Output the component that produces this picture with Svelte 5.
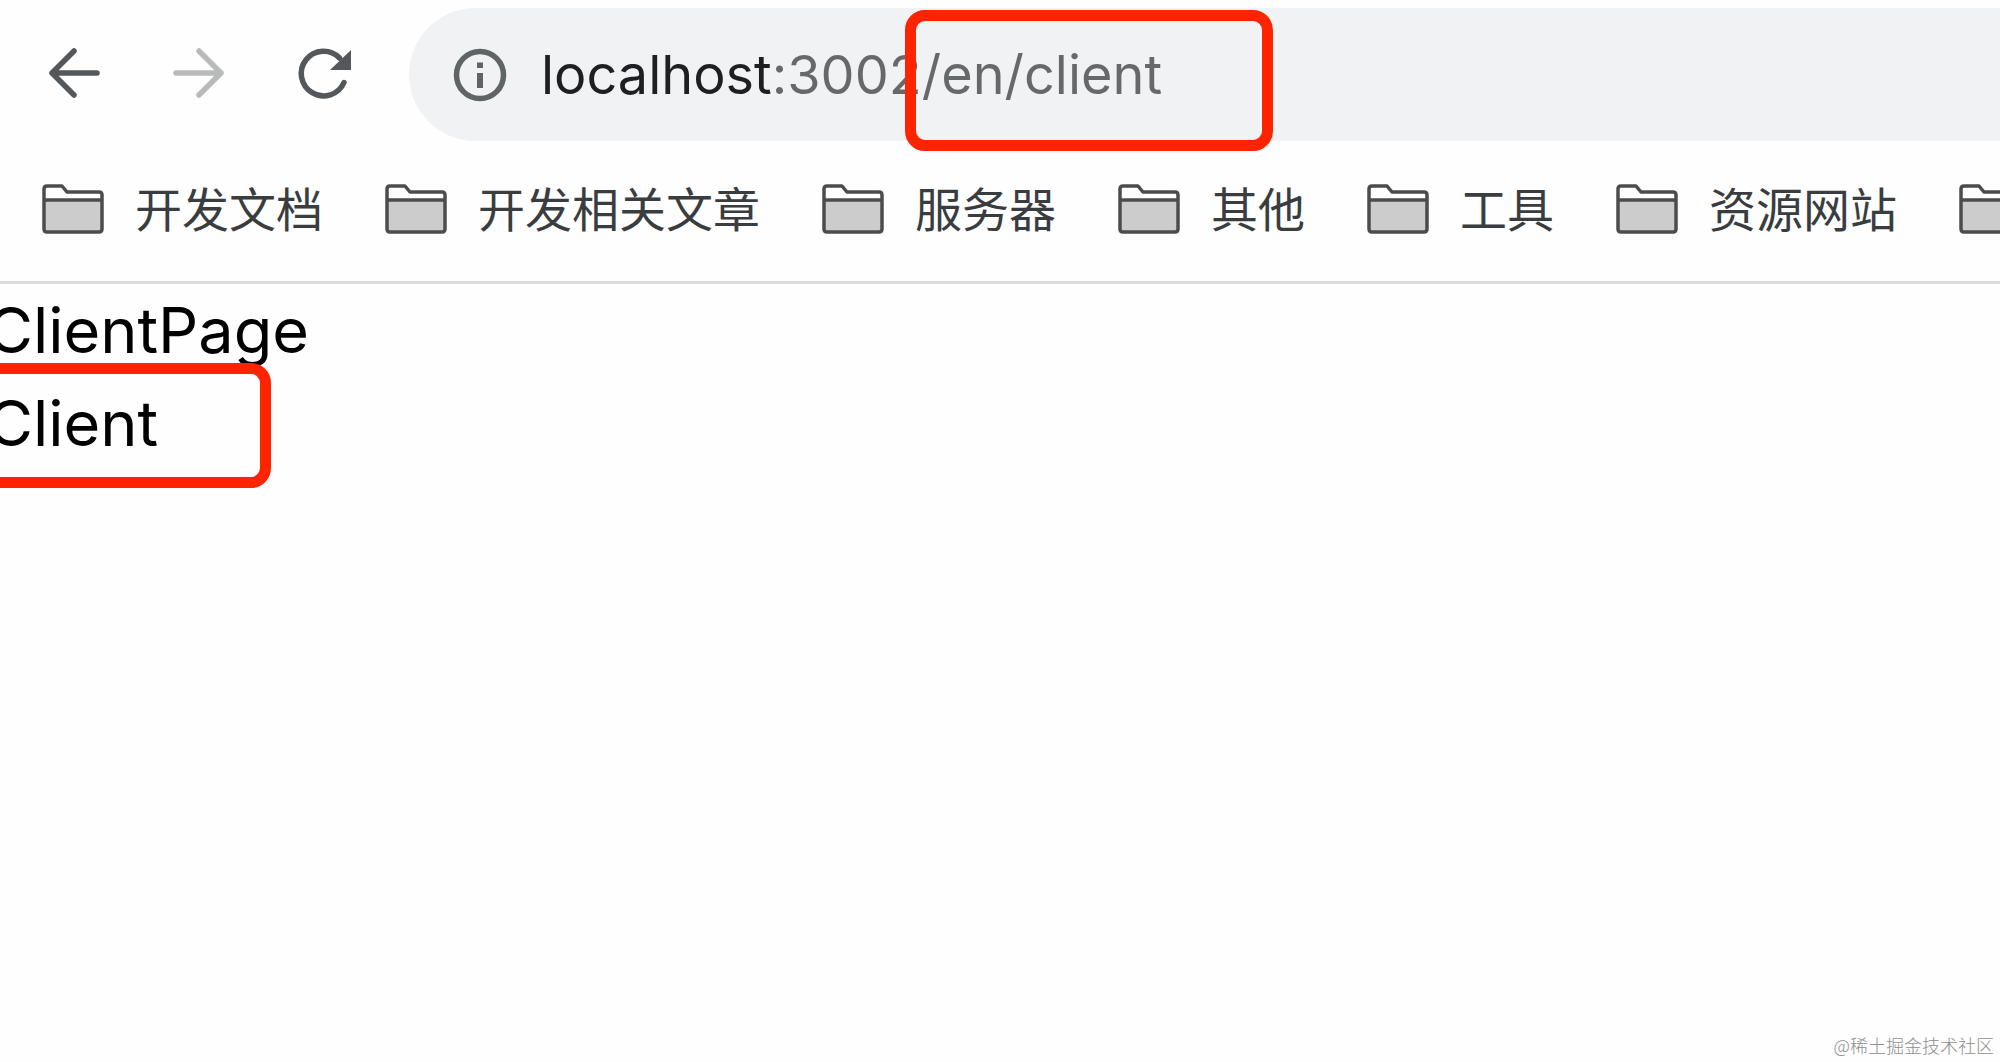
<script>
	let url = $state('localhost:3002/en/client');

	// the last folder has its label past the window edge
	const bookmarks = ['开发文档', '开发相关文章', '服务器', '其他', '工具', '资源网站', ''];
</script>

<div class="browser">
	<header>
		<div class="toolbar">
			<nav>
				<button aria-label="Back">
					<svg viewBox="0 0 56 56" fill="none" stroke="#54585b" stroke-width="5.500" stroke-linecap="round" stroke-linejoin="round">
						<path d="M51 28H6M28 6L6 28l22 22" />
					</svg>
				</button>
				<button aria-label="Forward">
					<svg viewBox="0 0 56 56" fill="none" stroke="#b9bbbb" stroke-width="5.500" stroke-linecap="round" stroke-linejoin="round">
						<path d="M5 28h45M28 6l22 22-22 22" />
					</svg>
				</button>
				<button aria-label="Reload">
					<svg viewBox="0 0 56 56">
						<path d="M48 37.500A22.300 22.300 0 1 1 43.500 13" fill="none" stroke="#54585b" stroke-width="5.500" stroke-linecap="round" />
						<path d="M55 5v20H34z" fill="#54585b" />
					</svg>
				</button>
			</nav>
			<div class="address">
				<svg viewBox="0 0 54 54" aria-hidden="true">
					<circle cx="27" cy="27" r="23.500" fill="none" stroke="#5f6466" stroke-width="5.500" />
					<path d="M24 14.500h6v5.500h-6zM24 25h6v15h-6z" fill="#5f6466" />
				</svg>
				<input type="text" aria-label="Address" spellcheck="false" bind:value={url} />
				<span class="mark path-mark"></span>
			</div>
		</div>
		<div class="bookmarks">
			{#each bookmarks as name}
				<a href="#bookmark" aria-label={name || 'Folder'}>
					<svg viewBox="0 0 62 50" aria-hidden="true">
						<path d="M2 16h58v29q0 3-3 3H5q-3 0-3-3z" fill="#ccc" />
						<path
							d="M2 5q0-3 3-3h15l5 6h32q3 0 3 3v34q0 3-3 3H5q-3 0-3-3zM2 16h58"
							fill="none"
							stroke="#4c4c4c"
							stroke-width="3.500"
							stroke-linejoin="round"
						/>
					</svg>
					<span>{name}</span>
				</a>
			{/each}
		</div>
	</header>
	<main>
		<div>ClientPage</div>
		<div class="client">
			Client
			<span class="mark client-mark"></span>
		</div>
	</main>
	<small>@稀土掘金技术社区</small>
</div>

<style>
	:global(body) {
		margin: 0;
		background: #fefefe;
	}

	.browser {
		position: relative;
		min-height: 100vh;
		overflow: hidden;
		font-family: Inter, 'Noto Sans CJK SC', sans-serif;
	}

	header {
		border-bottom: 3px solid #dcdcdc;
	}

	.toolbar {
		display: flex;
		padding-top: 8px;
	}

	nav {
		display: flex;
		flex: none;
		align-items: center;
		gap: 69px;
		padding: 0 57px 0 46px;
	}

	button {
		display: block;
		width: 56px;
		height: 56px;
		margin-bottom: 4px;
		padding: 0;
		border: 0;
		background: none;
	}

	svg {
		display: block;
		flex: none;
	}

	.address {
		position: relative;
		display: flex;
		flex: 1;
		align-items: center;
		height: 133px;
		padding-left: 44px;
		border-radius: 67px 0 0 67px;
		background: #f0f2f4;
	}

	.address svg {
		width: 54px;
		height: 54px;
	}

	/* host is dark, port and path are grey */
	input {
		flex: 1;
		min-width: 0;
		height: 80px;
		margin-left: 34px;
		padding: 0;
		border: 0;
		outline: 0;
		font: 400 54px Inter, sans-serif;
		color: #66696b;
		background: linear-gradient(90deg, #1d2023 231px, #66696b 231px);
		background-clip: text;
		-webkit-text-fill-color: transparent;
	}

	.mark {
		position: absolute;
		box-sizing: border-box;
		border: 11px solid #ff2400;
		border-radius: 20px;
		pointer-events: none;
	}

	.path-mark {
		top: 2px;
		left: 496px;
		width: 368px;
		height: 141px;
	}

	.bookmarks {
		display: flex;
		gap: 62px;
		height: 136px;
		padding: 0 0 4px 42px;
	}

	.bookmarks a {
		display: flex;
		flex: none;
		align-items: center;
		gap: 31px;
		font-size: 47px;
		color: #3a3d40;
		text-decoration: none;
		white-space: nowrap;
	}

	.bookmarks svg {
		width: 62px;
		height: 50px;
	}

	.bookmarks span {
		padding-bottom: 6px;
	}

	main {
		margin-left: -13px;
		font-size: 63px;
		line-height: 93px;
		color: #000;
	}

	.client {
		position: relative;
	}

	.client-mark {
		top: -14px;
		left: -20px;
		width: 304px;
		height: 125px;
	}

	small {
		position: absolute;
		right: 6px;
		bottom: 5px;
		font-family: 'Noto Sans CJK SC', sans-serif;
		font-size: 18px;
		font-weight: 300;
		line-height: 24px;
		color: #8e8e8e;
	}
</style>
